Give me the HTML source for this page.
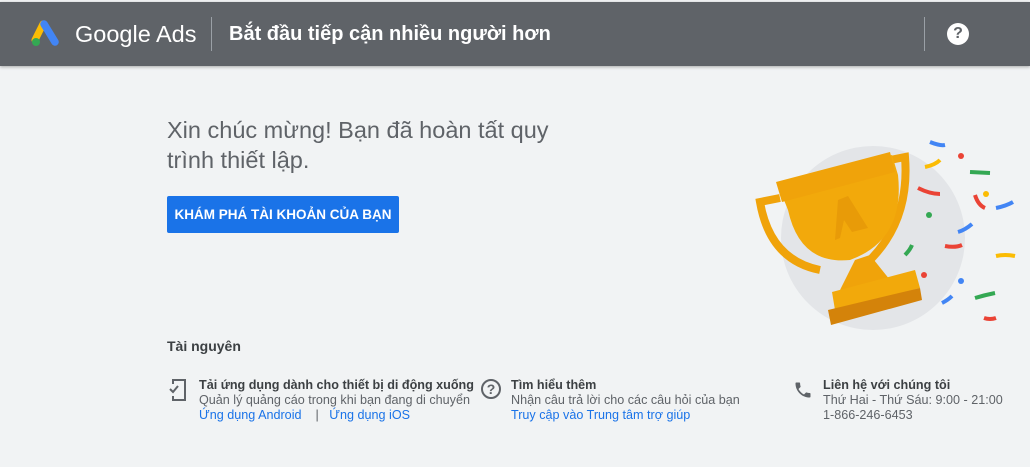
<!DOCTYPE html><html><head><meta charset="utf-8"><style>
*{margin:0;padding:0;box-sizing:border-box}
body{width:1030px;height:467px;background:#f1f3f4;font-family:"Liberation Sans",Arial,sans-serif;position:relative;overflow:hidden}
.hdr{position:absolute;left:0;top:2px;width:1030px;height:64px;background:#5f6368;box-shadow:0 1px 3px rgba(0,0,0,.3)}
.a{position:absolute;color:#3c4043}
.small{font-size:12.6px;line-height:15px}
.link{color:#1a73e8}
.sub{color:#5f6368}
</style></head><body>
<div class="hdr">
<svg style="position:absolute;left:31px;top:18px" width="32" height="28" viewBox="0 0 32 28"><path d="M12 4 L4 20" stroke="#fbbc04" stroke-width="7" stroke-linecap="round"/><path d="M13 4 L24 22" stroke="#4285f4" stroke-width="7.5" stroke-linecap="round"/><circle cx="5" cy="22" r="4" fill="#34a853"/></svg>
<div class="a" style="left:75px;top:19px;font-size:23.5px;color:#fff">Google Ads</div>
<div style="position:absolute;left:211px;top:15px;width:1px;height:34px;background:#9aa0a6"></div>
<div class="a" style="left:229px;top:21px;font-size:20px;font-weight:bold;color:#fff">Bắt đầu tiếp cận nhiều người hơn</div>
<div style="position:absolute;left:924px;top:15px;width:1px;height:34px;background:#9aa0a6"></div>
<div style="position:absolute;left:947px;top:21px;width:22px;height:22px;border-radius:50%;background:#fff;color:#5f6368;font-weight:bold;font-size:16px;text-align:center;line-height:22px">?</div>
</div>
<div class="a" style="left:167px;top:115px;font-size:23.5px;line-height:30px;color:#5f6368">Xin chúc mừng! Bạn đã hoàn tất quy<br>trình thiết lập.</div>
<div style="position:absolute;left:167px;top:196px;width:232px;height:37px;background:#1a73e8;color:#fff;font-size:13.5px;font-weight:bold;text-align:center;line-height:37px;border-radius:2px">KHÁM PHÁ TÀI KHOẢN CỦA BẠN</div>
<svg style="position:absolute;left:740px;top:120px" width="290" height="220" viewBox="0 0 290 220">
<circle cx="133" cy="118" r="92" fill="#e3e5e8"/>
<path d="M40 78 L20 82 Q30 140 80 150" fill="none" stroke="#f0a30a" stroke-width="8"/>
<path d="M150 40 L165 37 Q170 100 130 140" fill="none" stroke="#f0a30a" stroke-width="8"/>
<path d="M38 65 L152 35 L158 55 Q165 120 110 140 Q60 145 48 90 Z" fill="#f2a90b"/>
<path d="M36 62 L150 32 L155 52 L42 82 Z" fill="#f0a30a"/>
<path d="M115 140 L100 170 L150 160 L130 135 Z" fill="#f0a30a"/>
<path d="M92 172 L175 150 L180 168 L95 190 Z" fill="#f2a90b"/>
<path d="M88 190 L180 168 L182 180 L91 205 Z" fill="#d4830a"/>
<path d="M98 80 L108 76 L128 108 L112 112 L104 100 L100 118 L95 120 Z" fill="#e89b08"/>
<g stroke-width="4" fill="none" stroke-linecap="butt">
<path d="M190 22 Q200 26 205 25" stroke="#4285f4"/><path d="M185 47 Q195 45 200 40" stroke="#fbbc04"/>
<path d="M230 52 L250 53" stroke="#34a853"/><path d="M178 68 Q190 74 200 74" stroke="#ea4335"/>
<path d="M235 75 Q238 85 245 88" stroke="#ea4335"/><path d="M256 88 Q266 86 273 82" stroke="#4285f4"/>
<path d="M218 112 Q225 110 232 104" stroke="#4285f4"/><path d="M205 126 Q215 128 222 125" stroke="#ea4335"/>
<path d="M256 136 Q265 134 275 136" stroke="#fbbc04"/><path d="M165 135 Q170 130 172 125" stroke="#34a853"/>
<path d="M202 183 Q208 180 212 176" stroke="#4285f4"/><path d="M235 178 Q245 175 255 173" stroke="#34a853"/>
<path d="M244 198 Q250 200 256 198" stroke="#ea4335"/></g>
<circle cx="221" cy="36" r="3" fill="#ea4335"/><circle cx="246" cy="74" r="3" fill="#fbbc04"/><circle cx="189" cy="95" r="3" fill="#34a853"/><circle cx="184" cy="155" r="3" fill="#ea4335"/><circle cx="221" cy="161" r="3" fill="#4285f4"/>
</svg>
<div class="a" style="left:167px;top:338px;font-size:14px;font-weight:bold">Tài nguyên</div>
<svg style="position:absolute;left:168px;top:378px" width="20" height="24" viewBox="0 0 20 24" fill="none" stroke="#5f6368" stroke-width="2"><path d="M5 6 V2 H17 V22 H5 V18"/><path d="M2 11 L5 14 L10 8"/></svg>
<div class="a small" style="left:199px;top:378px"><b>Tải ứng dụng dành cho thiết bị di động xuống</b><br><span class="sub">Quản lý quảng cáo trong khi bạn đang di chuyển</span><br><span class="link">Ứng dụng Android</span> <span class="sub">&nbsp;&nbsp;&nbsp;|&nbsp;&nbsp;</span> <span class="link">Ứng dụng iOS</span></div>
<div style="position:absolute;left:481px;top:379px;width:20px;height:20px;border:2px solid #5f6368;border-radius:50%;color:#5f6368;font-size:14px;font-weight:bold;text-align:center;line-height:16px">?</div>
<div class="a small" style="left:511px;top:378px"><b>Tìm hiểu thêm</b><br><span class="sub">Nhận câu trả lời cho các câu hỏi của bạn</span><br><span class="link">Truy cập vào Trung tâm trợ giúp</span></div>
<svg style="position:absolute;left:793px;top:380px" width="20" height="20" viewBox="0 0 24 24"><path fill="#5f6368" d="M6.6 10.8c1.4 2.8 3.8 5.1 6.6 6.6l2.2-2.2c.3-.3.7-.4 1-.2 1.1.4 2.3.6 3.6.6.6 0 1 .4 1 1V20c0 .6-.4 1-1 1C10.6 21 3 13.4 3 4c0-.6.4-1 1-1h3.5c.6 0 1 .4 1 1 0 1.3.2 2.5.6 3.6.1.3 0 .7-.2 1z"/></svg>
<div class="a small" style="left:823px;top:378px"><b>Liên hệ với chúng tôi</b><br><span class="sub">Thứ Hai - Thứ Sáu: 9:00 - 21:00</span><br><span class="sub">1-866-246-6453</span></div>
</body></html>
